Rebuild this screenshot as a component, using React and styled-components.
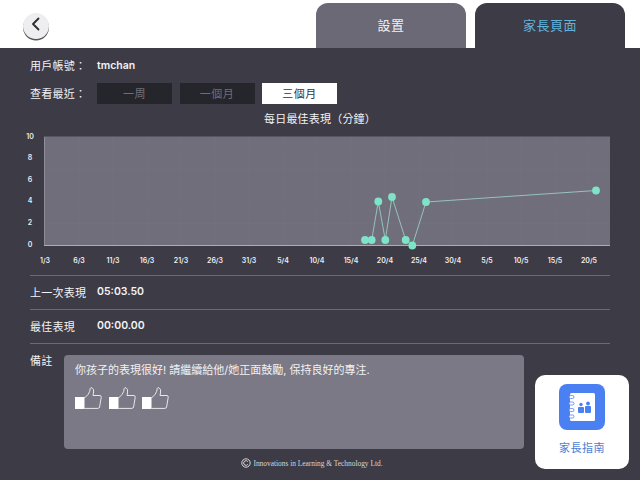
import styled, { createGlobalStyle } from "styled-components";

const latin = `"Inter", "Noto Sans CJK TC", sans-serif`;

const GlobalStyle = createGlobalStyle`
  html, body { margin: 0; padding: 0; background: #fff; }
  body { font-family: ${latin}; }
`;

const Page = styled.div`
  width: 640px;
  height: 480px;
  overflow: hidden;
  display: flex;
  flex-direction: column;
`;

const Header = styled.header`
  height: 48px;
  flex: none;
  display: flex;
  align-items: flex-end;
  justify-content: space-between;
  padding: 0 15px 0 23px;
  box-sizing: border-box;
`;

const BackButton = styled.button`
  width: 26px;
  height: 26px;
  margin-bottom: 9px;
  padding: 0 0 4px;
  border: 0;
  border-radius: 50%;
  background: #eeeef1;
  box-shadow: 0 1.5px 0 #55545c;
  display: flex;
  align-items: center;
  justify-content: center;
`;

const Tabs = styled.div`
  display: flex;
  gap: 9px;
`;

const Tab = styled.div`
  width: 150px;
  height: 45px;
  border-radius: 12px 12px 0 0;
  background: ${(p) => (p.$active ? "#3c3b46" : "#6a6975")};
  color: ${(p) => (p.$active ? "#63b2dc" : "#f0f0f2")};
  font-size: 13px;
  letter-spacing: 0.5px;
  display: flex;
  align-items: center;
  justify-content: center;
  padding-bottom: 2px;
  box-sizing: border-box;
`;

const Panel = styled.main`
  flex: 1;
  background: #3c3b46;
  color: #f2f2f4;
  display: flex;
  flex-direction: column;
`;

const InfoRow = styled.div`
  display: flex;
  align-items: center;
  height: 20px;
  padding-left: 30px;
  margin-top: ${(p) => p.$top || 0}px;
  font-size: 11px;
`;

const Label = styled.span`
  width: 67px;
  flex: none;
  letter-spacing: 0.25px;
`;

const Value = styled.span`
  font-size: 10.5px;
  font-weight: 600;
`;

const RangeGroup = styled.div`
  display: flex;
  gap: 7.5px;
`;

const RangeButton = styled.button`
  width: 75px;
  height: 21px;
  padding: 0;
  border: 0;
  font-family: inherit;
  font-size: 11px;
  letter-spacing: 0.5px;
  background: ${(p) => (p.$active ? "#ffffff" : "#25252c")};
  color: ${(p) => (p.$active ? "#33323a" : "#6f6e78")};
`;

const ChartTitle = styled.div`
  margin-top: 7px;
  height: 18px;
  line-height: 18px;
  text-align: center;
  font-size: 11px;
  letter-spacing: 0.2px;
`;

const ChartSvg = styled.svg`
  display: block;
  flex: none;
  width: 640px;
  height: 142px;
  text {
    fill: #eeeef0;
    font-family: ${latin};
    font-size: 7px;
    font-weight: 600;
    text-anchor: middle;
  }
`;

const Stats = styled.div`
  margin: 5px 30px 0;
  border-top: 1px solid #6b6a75;
`;

const StatRow = styled.div`
  height: 34px;
  padding-bottom: 2px;
  box-sizing: border-box;
  border-bottom: 1px solid #6b6a75;
  display: flex;
  align-items: center;
  font-size: 11px;
`;

const Bottom = styled.div`
  display: grid;
  grid-template-columns: 34px 460px 94px;
  grid-template-rows: 94px 1fr;
  padding: 11px 0 0 30px;
`;

const NoteLabel = styled.div`
  font-size: 11px;
  line-height: 12px;
  letter-spacing: 0.25px;
`;

const NoteBox = styled.div`
  background: #7a7985;
  border-radius: 4px;
  padding: 8px 11px;
  box-sizing: border-box;
  font-size: 11px;
  line-height: 15px;
`;

const Thumbs = styled.div`
  display: flex;
  gap: 6.5px;
  margin-top: 9px;
`;

const GuideCard = styled.div`
  grid-column: 3;
  grid-row: 1 / span 2;
  width: 94px;
  height: 94px;
  margin: 20px 0 0 11px;
  background: #fff;
  border-radius: 10px;
  display: flex;
  flex-direction: column;
  align-items: center;
  padding-top: 9px;
  box-sizing: border-box;
  color: #4a7fd6;
  font-size: 11px;
  letter-spacing: 0.5px;
  gap: 9px;
`;

const Footer = styled.div`
  grid-column: 2;
  grid-row: 2;
  margin: 8px 0 0 36px;
  display: flex;
  align-items: center;
  justify-content: center;
  gap: 2px;
  font-family: "Liberation Serif", serif;
  font-size: 7.4px;
  color: #d8d8dc;
  white-space: nowrap;
`;

const xLabels = ["1/3", "6/3", "11/3", "16/3", "21/3", "26/3", "31/3", "5/4", "10/4", "15/4", "20/4", "25/4", "30/4", "5/5", "10/5", "15/5", "20/5"];
const yLabels = [10, 8, 6, 4, 2, 0];
const points = [
  [365, 112], [371.7, 112], [378.3, 73.5], [385.3, 112], [392, 69],
  [405.7, 112], [412.3, 117.5], [426, 74], [596, 62.5],
];

function Chart() {
  const vLines = Array.from({ length: 17 }, (_, i) => 45 + i * 34);
  const hLines = Array.from({ length: 10 }, (_, i) => 9 + i * 10.8);
  return (
    <ChartSvg viewBox="0 0 640 142">
      <rect x="44" y="9" width="566" height="108" fill="#6f6e7a" />
      {vLines.map((x) => (
        <line key={x} x1={x} x2={x} y1="9" y2="117" stroke="#72717d" strokeWidth="1" />
      ))}
      {hLines.map((y) => (
        <line key={y} x1="44" x2="610" y1={y} y2={y} stroke="#71707c" strokeWidth="1" />
      ))}
      <line x1="44.5" x2="44.5" y1="9" y2="117" stroke="#8e8d97" />
      <line x1="44" x2="610" y1="117.5" y2="117.5" stroke="#aeadb5" />
      {yLabels.map((v, i) => (
        <text key={v} x="30" y={10.5 + i * 21.6}>{v}</text>
      ))}
      {xLabels.map((t, i) => (
        <text key={t} x={45 + i * 34} y="135">{t}</text>
      ))}
      <polyline
        points={points.map((p) => p.join(",")).join(" ")}
        fill="none"
        stroke="#9fd8cd"
        strokeWidth="0.8"
      />
      {points.map(([x, y]) => (
        <circle key={x} cx={x} cy={y} r="3.9" fill="#7fe3c8" />
      ))}
    </ChartSvg>
  );
}

function ThumbIcon() {
  return (
    <svg width="27" height="22" viewBox="0 0 27 22">
      <rect x="0" y="10" width="9.5" height="12" fill="#fff" />
      <path
        d="M9.5 11 L13 7.5 Q15.2 4.5 15.2 1.5 Q15.5 0.5 17 0.8 Q19 1.6 18.6 5 L18 8.5 L25 8.5 Q26.6 8.8 26.2 10.5 L24.6 20 Q24.2 21.4 22.8 21.4 L9.5 21.4"
        fill="none"
        stroke="#f4f4f6"
        strokeWidth="0.9"
        strokeLinejoin="round"
      />
    </svg>
  );
}

function GuideIcon() {
  return (
    <svg width="46" height="46" viewBox="0 0 46 46">
      <rect width="46" height="46" rx="8" fill="#4a80f2" />
      <rect x="11" y="9" width="25" height="28" rx="1.5" fill="#fff" />
      {[11.5, 18, 24.5, 31].map((y) => (
        <rect key={y} x="10" y={y} width="5" height="3" rx="1.5" fill="#fff" stroke="#4a80f2" strokeWidth="0.8" />
      ))}
      <g fill="#4a80f2">
        <circle cx="22" cy="20.5" r="1.7" />
        <rect x="19" y="23" width="6" height="6" rx="1" />
        <circle cx="29" cy="19.5" r="1.9" />
        <rect x="26" y="22" width="6" height="7" rx="1" />
      </g>
    </svg>
  );
}

export default function App() {
  return (
    <Page>
      <GlobalStyle />
      <Header>
        <BackButton aria-label="back">
          <svg width="12" height="14" viewBox="0 0 12 14">
            <path d="M8.5 1.5 L3 7 L8.5 12.5" fill="none" stroke="#2b2b30" strokeWidth="1.8" strokeLinecap="round" strokeLinejoin="round" />
          </svg>
        </BackButton>
        <Tabs>
          <Tab>設置</Tab>
          <Tab $active>家長頁面</Tab>
        </Tabs>
      </Header>
      <Panel>
        <InfoRow $top={7}>
          <Label>用戶帳號：</Label>
          <Value>tmchan</Value>
        </InfoRow>
        <InfoRow $top={8}>
          <Label>查看最近：</Label>
          <RangeGroup>
            <RangeButton>一周</RangeButton>
            <RangeButton>一個月</RangeButton>
            <RangeButton $active>三個月</RangeButton>
          </RangeGroup>
        </InfoRow>
        <ChartTitle>每日最佳表現（分鐘）</ChartTitle>
        <Chart />
        <Stats>
          <StatRow>
            <Label>上一次表現</Label>
            <Value>05:03.50</Value>
          </StatRow>
          <StatRow>
            <Label>最佳表現</Label>
            <Value>00:00.00</Value>
          </StatRow>
        </Stats>
        <Bottom>
          <NoteLabel>備註</NoteLabel>
          <NoteBox>
            你孩子的表現很好! 請繼續給他/她正面鼓勵, 保持良好的專注.
            <Thumbs>
              <ThumbIcon />
              <ThumbIcon />
              <ThumbIcon />
            </Thumbs>
          </NoteBox>
          <GuideCard>
            <GuideIcon />
            家長指南
          </GuideCard>
          <Footer>
            <svg width="10" height="10" viewBox="0 0 10 10">
              <circle cx="5" cy="5" r="4.2" fill="none" stroke="#e8e8ea" strokeWidth="0.9" />
              <path d="M6.8 3.6 A2.3 2.3 0 1 0 6.8 6.4" fill="none" stroke="#e8e8ea" strokeWidth="0.9" />
            </svg>
            Innovations in Learning &amp; Technology Ltd.
          </Footer>
        </Bottom>
      </Panel>
    </Page>
  );
}
